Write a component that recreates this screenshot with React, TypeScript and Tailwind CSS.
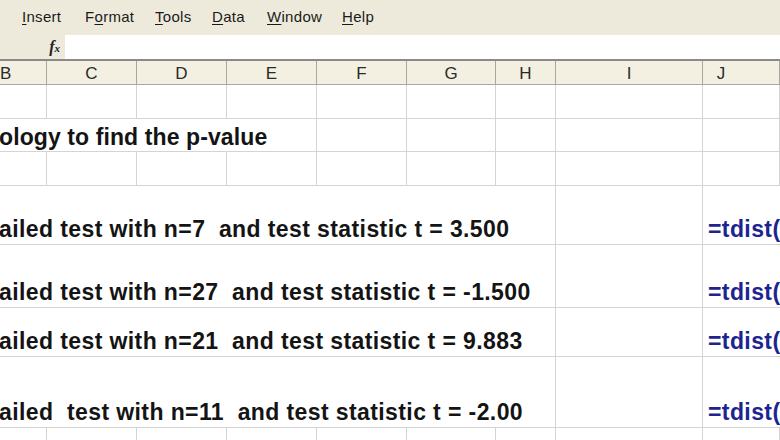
import React from 'react';

const cols = ['B', 'C', 'D', 'E', 'F', 'G', 'H', 'I', 'J'];

const gridCols = 'grid grid-cols-[47px_90px_90px_90px_90px_89px_60px_147px_1fr]';

const menus: { label: string; u: number; w: string }[] = [
  { label: 'Insert', u: 0, w: 'w-[63px]' },
  { label: 'Format', u: 1, w: 'w-[70px]' },
  { label: 'Tools', u: 0, w: 'w-[57px]' },
  { label: 'Data', u: 0, w: 'w-[55px]' },
  { label: 'Window', u: 0, w: 'w-[75px]' },
  { label: 'Help', u: 0, w: 'w-[60px]' },
];

// spacing copied as typed in the sheet (double spaces included)
const rows = [
  { h: 'h-[59px]', text: 'ailed test with n=7  and test statistic t = 3.500' },
  { h: 'h-[63px]', text: 'ailed test with n=27  and test statistic t = -1.500' },
  { h: 'h-[49px]', text: 'ailed test with n=21  and test statistic t = 9.883' },
  { h: 'h-[71px]', text: 'ailed  test with n=11  and test statistic t = -2.00' },
];

function Cell({ className = '' }: { className?: string }) {
  return <div className={`border-r border-b border-[#d4d4d4] ${className}`} />;
}

function EmptyRow({ h }: { h: string }) {
  return (
    <div className={`${gridCols} ${h}`}>
      {cols.map((c) => (
        <Cell key={c} />
      ))}
    </div>
  );
}

export default function App() {
  return (
    <div className="w-[780px] h-[440px] overflow-hidden bg-white font-['Liberation_Sans',Arial,sans-serif]">
      {/* Menu bar */}
      <div className="h-[35px] bg-[#eeeadb] flex items-center pl-[22px] text-[15px] tracking-[0.3px] text-[#1a1a1a]">
        {menus.map((m) => (
          <span key={m.label} className={m.w}>
            {m.label.slice(0, m.u)}
            <span className="underline underline-offset-2">{m.label[m.u]}</span>
            {m.label.slice(m.u + 1)}
          </span>
        ))}
      </div>

      {/* Formula bar */}
      <div className="h-[24px] flex bg-[#eeeadb]">
        <div className="w-[65px] flex items-center justify-end pr-[5px]">
          <span className="font-['Liberation_Serif',serif] italic font-bold text-[16px] text-[#222] leading-none">
            f<span className="text-[11px]">x</span>
          </span>
        </div>
        <div className="flex-1 bg-white" />
      </div>

      {/* Column headers */}
      <div className={`${gridCols} h-[26px] bg-[#f3f0e1] border-t-2 border-[#8a8a8a] border-b border-b-[#a8a8a0] text-[17px] text-[#2a2a2a]`}>
        {cols.map((c, i) => (
          <div
            key={c}
            className={`flex items-center border-r border-[#a8a8a0] ${i === 0 ? 'justify-start' : 'justify-center'} ${i === 8 ? 'pr-[40px]' : ''}`}
          >
            {c}
          </div>
        ))}
      </div>

      <div className="text-[23px] font-bold tracking-[0.4px] text-[#141414]">
        <EmptyRow h="h-[34px]" />

        {/* Title row */}
        <div className={`${gridCols} h-[33px]`}>
          <div className="col-span-4 border-r border-b border-[#d4d4d4] flex items-end pb-[1px] whitespace-nowrap">
            <span className="-ml-[1px] leading-[26px] tracking-[0.1px]">ology to find the p-value</span>
          </div>
          {cols.slice(4).map((c) => (
            <Cell key={c} />
          ))}
        </div>

        <EmptyRow h="h-[34px]" />

        {rows.map((r) => (
          <div key={r.text} className={`${gridCols} ${r.h}`}>
            <div className="col-span-7 border-r border-b border-[#d4d4d4] flex items-end pb-[2px] whitespace-pre">
              <span className="-ml-[1px] leading-[26px]">{r.text}</span>
            </div>
            <Cell />
            <div className="border-b border-[#d4d4d4] flex items-end pb-[2px] pl-[5px] overflow-hidden whitespace-nowrap">
              <span className="leading-[26px] text-[#1d2490]">=tdist(</span>
            </div>
          </div>
        ))}

        <EmptyRow h="h-[40px]" />
      </div>
    </div>
  );
}
